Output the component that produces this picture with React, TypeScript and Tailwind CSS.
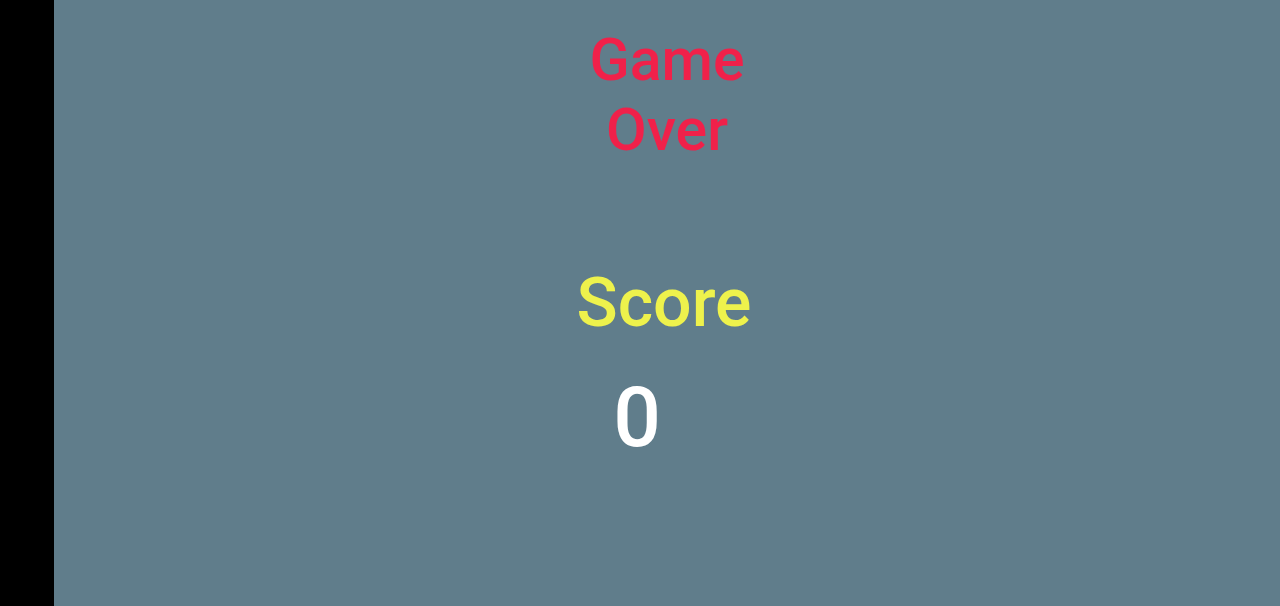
export default function App() {
  return (
    <div className="flex h-[606px] w-[1280px] overflow-hidden" style={{ fontFamily: "Roboto, 'Noto Sans', sans-serif" }}>
      <div className="w-[54px] shrink-0 bg-black" />
      <div className="flex flex-1 flex-col items-center bg-[#607d8b]">
        <div className="mt-[25px] text-center text-[59px] font-medium leading-[70px] text-[#f0214a]">
          Game
          <br />
          Over
        </div>
        <div className="mt-[98px] mr-[6px] text-[68px] font-medium leading-[80px] text-[#eef24c]">Score</div>
        <div className="mt-[25px] mr-[60px] text-[84px] font-medium leading-[100px] text-white">0</div>
      </div>
    </div>
  );
}
